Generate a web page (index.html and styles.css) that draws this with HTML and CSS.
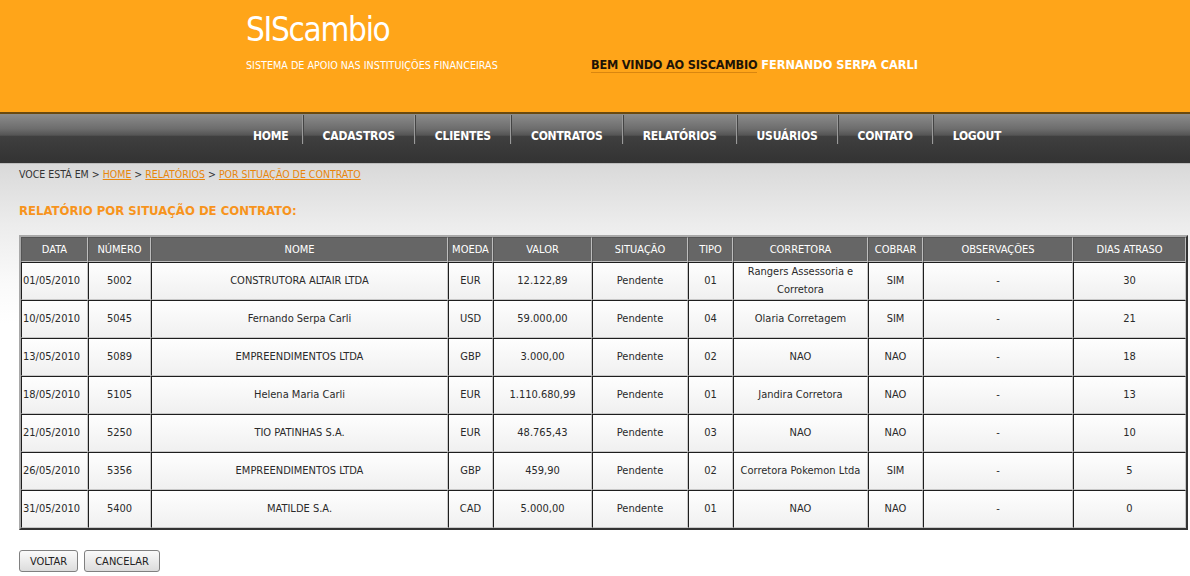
FILE: index.html
```html
<!DOCTYPE html>
<html lang="pt-BR">
<head>
<meta charset="utf-8">
<title>SIScambio</title>
<link rel="stylesheet" href="styles.css">
</head>
<body>
<header class="top">
  <div class="brand">
    <h1 class="logo">SIScambio</h1>
    <div class="brand-row">
      <p class="tagline">SISTEMA DE APOIO NAS INSTITUIÇÕES FINANCEIRAS</p>
      <p class="welcome"><span class="welcome-lead">BEM VINDO AO SISCAMBIO</span> <span class="welcome-user">FERNANDO SERPA CARLI</span></p>
    </div>
  </div>
</header>
<nav class="menu">
  <ul class="menu-list">
    <li class="menu-item first">HOME</li>
    <li class="menu-item">CADASTROS</li>
    <li class="menu-item">CLIENTES</li>
    <li class="menu-item">CONTRATOS</li>
    <li class="menu-item">RELATÓRIOS</li>
    <li class="menu-item">USUÁRIOS</li>
    <li class="menu-item">CONTATO</li>
    <li class="menu-item last">LOGOUT</li>
  </ul>
</nav>
<main class="content">
  <p class="crumbs">VOCE ESTÁ EM &gt; <a href="#">HOME</a> &gt; <a href="#">RELATÓRIOS</a> &gt; <a href="#">POR SITUAÇÃO DE CONTRATO</a></p>
  <h2 class="title">RELATÓRIO POR SITUAÇÃO DE CONTRATO:</h2>
  <table class="report">
    <colgroup>
      <col style="width:67px"><col style="width:63px"><col style="width:297px"><col style="width:45px"><col style="width:99px"><col style="width:96px"><col style="width:45px"><col style="width:135px"><col style="width:55px"><col style="width:150px"><col style="width:113px">
    </colgroup>
    <thead>
      <tr><th>DATA</th><th>NÚMERO</th><th>NOME</th><th>MOEDA</th><th>VALOR</th><th>SITUAÇÃO</th><th>TIPO</th><th>CORRETORA</th><th>COBRAR</th><th>OBSERVAÇÕES</th><th>DIAS ATRASO</th></tr>
    </thead>
    <tbody>
      <tr><td class="left">01/05/2010</td><td>5002</td><td>CONSTRUTORA ALTAIR LTDA</td><td>EUR</td><td>12.122,89</td><td>Pendente</td><td>01</td><td>Rangers Assessoria e Corretora</td><td>SIM</td><td>-</td><td>30</td></tr>
      <tr><td class="left">10/05/2010</td><td>5045</td><td>Fernando Serpa Carli</td><td>USD</td><td>59.000,00</td><td>Pendente</td><td>04</td><td>Olaria Corretagem</td><td>SIM</td><td>-</td><td>21</td></tr>
      <tr><td class="left">13/05/2010</td><td>5089</td><td>EMPREENDIMENTOS LTDA</td><td>GBP</td><td>3.000,00</td><td>Pendente</td><td>02</td><td>NAO</td><td>NAO</td><td>-</td><td>18</td></tr>
      <tr><td class="left">18/05/2010</td><td>5105</td><td>Helena Maria Carli</td><td>EUR</td><td>1.110.680,99</td><td>Pendente</td><td>01</td><td>Jandira Corretora</td><td>NAO</td><td>-</td><td>13</td></tr>
      <tr><td class="left">21/05/2010</td><td>5250</td><td>TIO PATINHAS S.A.</td><td>EUR</td><td>48.765,43</td><td>Pendente</td><td>03</td><td>NAO</td><td>NAO</td><td>-</td><td>10</td></tr>
      <tr><td class="left">26/05/2010</td><td>5356</td><td>EMPREENDIMENTOS LTDA</td><td>GBP</td><td>459,90</td><td>Pendente</td><td>02</td><td>Corretora Pokemon Ltda</td><td>SIM</td><td>-</td><td>5</td></tr>
      <tr><td class="left">31/05/2010</td><td>5400</td><td>MATILDE S.A.</td><td>CAD</td><td>5.000,00</td><td>Pendente</td><td>01</td><td>NAO</td><td>NAO</td><td>-</td><td>0</td></tr>
    </tbody>
  </table>
  <div class="actions">
    <button class="btn" type="button">VOLTAR</button>
    <button class="btn" type="button">CANCELAR</button>
  </div>
</main>
</body>
</html>
```
FILE: styles.css
```css
html, body {
  margin: 0;
  padding: 0;
}
body {
  font-family: "DejaVu Sans Condensed", "DejaVu Sans", sans-serif;
  font-size: 11px;
  color: #333;
  background: #fff;
}
.top {
  height: 112px;
  background: #ffa519;
  border-bottom: 2px solid #6b4a10;
  box-shadow: 0 1px 2px rgba(0,0,0,0.4);
}
.brand {
  padding-left: 246px;
  padding-top: 10px;
}
.logo {
  margin: 0;
  font-weight: normal;
  font-size: 33px;
  line-height: 40px;
  color: #fff;
  letter-spacing: -1.3px;
}
.brand-row {
  display: flex;
  align-items: baseline;
  margin-top: 7px;
}
.tagline {
  margin: 0;
  color: #fff;
  font-size: 10.7px;
  width: 345px;
}
.welcome {
  margin: 0;
  font-weight: bold;
  font-size: 12.6px;
}
.welcome-lead {
  color: #1e1406;
  border-bottom: 1px solid #d9860f;
  letter-spacing: -0.2px;
}
.welcome-user {
  color: #fff;
}
.menu {
  height: 49px;
  background: linear-gradient(#8c8c8c 0%, #6d6d6d 30%, #555 43%, #3f3f3f 46%, #383838 75%, #333 100%);
  border-bottom: 1px solid #bdbdbd;
  box-shadow: 0 2px 3px rgba(0,0,0,0.2);
}
.menu-list {
  list-style: none;
  margin: 0;
  padding: 0 0 0 237px;
  display: flex;
}
.menu-item {
  position: relative;
  padding: 0 20px 0 20px;
  height: 45px;
  line-height: 45px;
  color: #fff;
  font-weight: bold;
  font-size: 12px;
  letter-spacing: -0.2px;
}
.menu-item.first {
  padding: 0 14px 0 16px;
}
.menu-item::after {
  content: "";
  position: absolute;
  right: 0;
  top: 1px;
  height: 29px;
  width: 1px;
  background: #9a9a9a;
  box-shadow: 1px 0 0 #444;
}
.menu-item.last::after {
  display: none;
}
.content {
  background: linear-gradient(#d9d9d9 0px, #ececec 60px, #fafafa 120px, #fff 160px);
  padding: 3px 4px 0 19px;
}
.crumbs {
  margin: 0;
  font-size: 10.5px;
  line-height: 14px;
  color: #333;
}
.crumbs a {
  color: #e8860b;
}
.title {
  margin: 22px 0 0;
  font-size: 13px;
  line-height: 16px;
  color: #f7941d;
}
.report {
  margin-top: 16px;
  width: 1167px;
  table-layout: fixed;
  border-collapse: separate;
  border-spacing: 0;
  border: 2px solid;
  border-color: #a9a9a9 #333 #333 #a9a9a9;
  background: #e6e6e6;
}
.report th {
  height: 23px;
  padding: 0;
  background: #666;
  color: #fff;
  font-weight: normal;
  font-size: 11px;
  border: 1px solid;
  border-color: #555 #bdbdbd #bdbdbd #555;
}
.report td {
  height: 36px;
  padding: 0 2px;
  text-align: center;
  font-size: 11px;
  line-height: 18px;
  color: #2a2a2a;
  background: linear-gradient(#fefefe, #f0f0f0);
  border: 1px solid;
  border-color: #1e1e1e #c8c8c8 #c8c8c8 #1e1e1e;
}
.report td.left {
  text-align: left;
  padding-left: 1px;
}
.actions {
  display: flex;
  gap: 6px;
  padding: 20px 0 0;
  height: 30px;
}
.btn {
  height: 22px;
  padding: 0 10px;
  font-family: inherit;
  font-size: 11px;
  color: #222;
  border: 1px solid #808080;
  border-radius: 3px;
  background: linear-gradient(#fafafa, #dcdcdc);
}
```
